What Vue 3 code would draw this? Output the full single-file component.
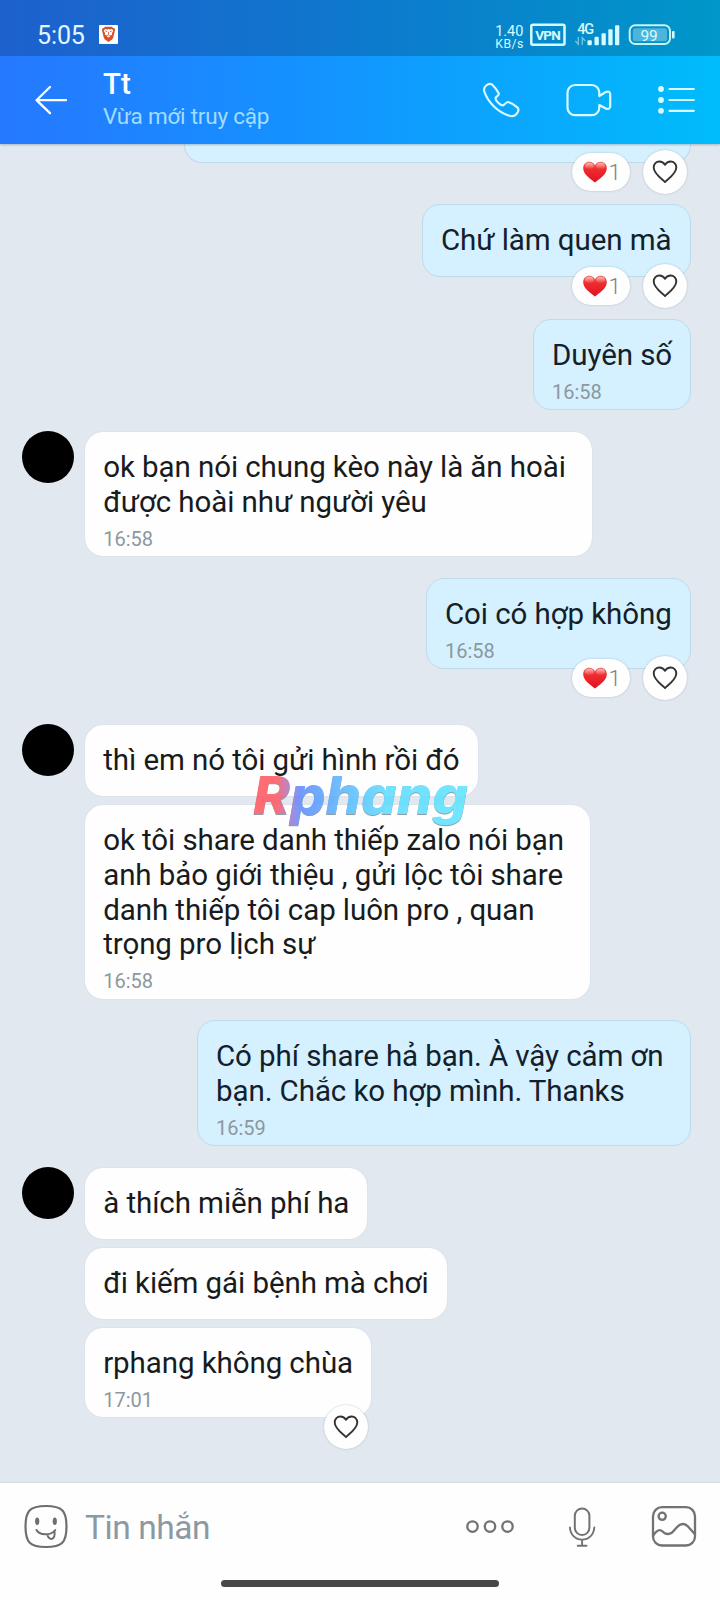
<script setup>
const messages = [
  { out: true, cut: true, lines: [], w: 507, h: 18, gap: 0, react: true, count: true },
  { out: true, lines: ['Chứ làm quen mà'], w: 269, h: 73, gap: 41, react: true, count: true },
  { out: true, lines: ['Duyên số'], time: '16:58', w: 158, h: 91, gap: 42 },
  { avatar: true, lines: ['ok bạn nói chung kèo này là ăn hoài', 'được hoài như người yêu'], time: '16:58', w: 506.5, h: 124, gap: 22 },
  { out: true, lines: ['Coi có hợp không'], time: '16:58', w: 265, h: 91, gap: 22, react: true, count: true },
  { avatar: true, lines: ['thì em nó tôi gửi hình rồi đó'], w: 393, h: 71, gap: 56 },
  {
    lines: ['ok tôi share danh thiếp zalo nói bạn', 'anh bảo giới thiệu , gửi lộc tôi share', 'danh thiếp tôi cap luôn pro , quan', 'trọng pro lịch sự'],
    time: '16:58', w: 505, h: 194, gap: 9,
  },
  { out: true, lines: ['Có phí share hả bạn. À vậy cảm ơn', 'bạn. Chắc ko hợp mình. Thanks'], time: '16:59', w: 494, h: 126, gap: 21 },
  { avatar: true, lines: ['à thích miễn phí ha'], w: 282, h: 71, gap: 22 },
  { lines: ['đi kiếm gái bệnh mà chơi'], w: 362, h: 71, gap: 9 },
  { lines: ['rphang không chùa'], time: '17:01', w: 286, h: 89, gap: 9, react: true },
]
const bars = [
  { x: 587.5, h: 5 },
  { x: 594.5, h: 8.5 },
  { x: 601.5, h: 12 },
  { x: 608.3, h: 16 },
  { x: 615, h: 20 },
]
</script>

<template>
  <div class="screen">
    <header class="top">
      <div class="status">
        <span class="clock">5:05</span>
        <svg class="brave" width="19" height="19" viewBox="0 0 19 19">
          <rect width="19" height="19" rx="1" fill="#fff" />
          <path d="M6 1.8h7l1.1 1.3 1.5.2.4 2.1-.3 1-1.5 6.3-1.1 1.7-3.6 2.6-3.6-2.6-1.1-1.7L3.300 6.400 3 5.400l.4-2.100 1.500-.2z" fill="#d9502a" />
          <path d="M6 4l2 .4L9.500 4l1.500.4L13 4l1.300 2-1.500 2.300.4 1.200-1.500 1-1-.6.300 1.600-1.500 1-1.500-1 .3-1.600-1 .6-1.500-1 .4-1.200L4.700 6z" fill="#fff" />
          <path d="M6.200 6l2 .7M12.800 6l-2 .7M9.500 6.800v3M8.200 10l1.300.7 1.300-.7" stroke="#d9502a" fill="none" stroke-width=".8" />
        </svg>
        <svg class="signals" width="192" height="56" viewBox="490 0 192 56">
          <g fill="#d6fbff">
            <text x="495.300" y="35.800" font-size="14.500" textLength="28">1.40</text>
            <text x="495.300" y="47.800" font-size="12.300" textLength="28">KB/s</text>
            <rect x="531.300" y="24.800" width="33.200" height="20" rx="1.500" fill="none" stroke="#d6fbff" stroke-width="2.500" />
            <text x="535.200" y="39.600" font-size="13.500" font-weight="700" textLength="25.500">VPN</text>
            <text x="577.300" y="33.500" font-size="14.500" font-weight="500" textLength="16.800">4G</text>
            <rect v-for="b in bars" :key="b.x" :x="b.x" :y="45.300 - b.h" width="4.300" :height="b.h" rx="1" />
            <path d="M578.300 37v7.200l-3-3.200M582.300 45v-7.200l3 3.200" stroke="#d6fbff" stroke-width="1.400" fill="none" opacity=".5" />
            <rect x="629.700" y="25.300" width="40.300" height="18.700" rx="5.500" fill="none" stroke="#c8f3f5" stroke-width="2" />
            <rect x="632.800" y="28.200" width="34.200" height="13" rx="2.500" fill="#4db4dc" />
            <rect x="672" y="31" width="2.600" height="7.500" rx="1" />
            <text x="640.600" y="40.600" font-size="15.500" textLength="17">99</text>
          </g>
        </svg>
      </div>
      <div class="appbar">
        <svg class="back" width="34" height="32" viewBox="34 84 34 32">
          <path d="M66 100.200H36.500M50 87L36.500 100.200 50 113.200" fill="none" stroke="#fff" stroke-width="2.300" stroke-linecap="round" stroke-linejoin="round" />
        </svg>
        <div class="who">
          <div class="name">Tt</div>
          <div class="seen">Vừa mới truy cập</div>
        </div>
        <svg class="actions" width="220" height="44" viewBox="480 78 220 44">
          <g fill="none" stroke="#d9fbff" stroke-width="2.200" stroke-linejoin="round" stroke-linecap="round">
            <path d="M486.200 85.500C488 84 490.500 83.200 492.300 84.800C494.800 87.200 497.300 90.500 498.700 93.200C499.600 95.300 496 96.600 495.500 98.200C495.300 100.500 500.500 105.400 502.700 105.400C504.500 105.200 506.200 101.600 508.200 102C511.500 103 515 105.300 517.300 107.300C519.400 109.500 518 112.300 516.300 114.200C514.500 116.100 512 116.500 509.300 115.700C498 112.300 488 102.500 484.300 91.500C483.500 89 484.300 87.100 486.200 85.500Z" />
            <path d="M599.300 96v-3.500a7.500 7.500 0 0 0-7.500-7.500H575a7.500 7.500 0 0 0-7.500 7.500v15.200a7.500 7.500 0 0 0 7.500 7.500h16.800a7.500 7.500 0 0 0 7.500-7.500V105l6.500 3.500c2.300 1 4.400.3 4.400-2.200V94.200c0-2.500-2.100-3.200-4.400-2.200z" />
            <path d="M669.500 89h24.300M669.500 100h24.300M669.500 110.800h24.300" />
          </g>
          <g fill="#d9fbff"><circle cx="661" cy="89" r="2.900" /><circle cx="661" cy="100" r="2.900" /><circle cx="661" cy="110.800" r="2.900" /></g>
        </svg>
      </div>
    </header>

    <main class="chat">
      <div v-for="(m, i) in messages" :key="i" class="row" :class="{ out: m.out }" :style="{ marginTop: m.gap + 'px' }">
        <div v-if="!m.out" class="side"><div v-if="m.avatar" class="avatar"></div></div>
        <div class="bubble" :class="{ mine: m.out, cut: m.cut }" :style="{ width: m.w + 'px', height: m.h + 'px' }">
          <div v-for="l in m.lines" :key="l" class="line">{{ l }}</div>
          <div v-if="m.time" class="time">{{ m.time }}</div>
          <div v-if="m.react" class="reactions">
            <div v-if="m.count" class="pill">
              <svg width="24" height="22" viewBox="0 0 24 22">
                <defs>
                  <linearGradient :id="'red' + i" x1="0" y1="0" x2="0" y2="1">
                    <stop offset="0" stop-color="#ee6a5c" /><stop offset=".35" stop-color="#f02c30" /><stop offset="1" stop-color="#e01222" />
                  </linearGradient>
                  <linearGradient :id="'shine' + i" x1="0" y1="0" x2="0" y2="1">
                    <stop offset="0" stop-color="#fff" stop-opacity=".55" /><stop offset="1" stop-color="#fff" stop-opacity="0" />
                  </linearGradient>
                </defs>
                <path d="M12 21.500C8 18 .2 13.800.2 7.200C.2 3.200 3 .8 6.200.8C9 .8 11 2.200 12 4.400C13 2.200 15 .8 17.800.8C21 .8 23.800 3.200 23.800 7.200C23.800 13.800 16 18 12 21.500Z" :fill="`url(#red${i})`" />
                <ellipse cx="6.300" cy="5" rx="4.300" ry="3.300" :fill="`url(#shine${i})`" />
                <ellipse cx="17.700" cy="5" rx="4.300" ry="3.300" :fill="`url(#shine${i})`" />
              </svg>
              <span class="count">1</span>
            </div>
            <div class="like">
              <svg width="26" height="24" viewBox="0 0 26 24">
                <path d="M13 22C10 19 1.700 13.600 1.700 7.500C1.700 4 4.300 1.500 7.300 1.500C10 1.500 12 3 13 4.800C14 3 16 1.500 18.700 1.500C21.700 1.500 24.300 4 24.300 7.500C24.300 13.600 16 19 13 22Z" fill="none" stroke="#333" stroke-width="1.900" stroke-linejoin="round" />
              </svg>
            </div>
          </div>
        </div>
      </div>
      <svg class="watermark" width="230" height="70" viewBox="246 765 230 70">
        <defs>
          <linearGradient id="brand" gradientUnits="userSpaceOnUse" x1="253" y1="0" x2="468" y2="0">
            <stop offset="0" stop-color="#ff5a62" /><stop offset=".11" stop-color="#ff5a62" /><stop offset=".17" stop-color="#a878c8" />
            <stop offset=".22" stop-color="#5f8dff" /><stop offset=".42" stop-color="#5cb8ff" /><stop offset=".62" stop-color="#5fdcff" /><stop offset="1" stop-color="#5fe4ff" />
          </linearGradient>
        </defs>
        <text class="mark" x="253" y="813.500" textLength="215" lengthAdjust="spacingAndGlyphs" fill="url(#brand)">Rphang</text>
      </svg>
    </main>

    <footer class="composer">
      <div class="inputs">
        <svg width="46" height="46" viewBox="23 1504 46 46">
          <g fill="none" stroke="#6e6e6e" stroke-width="2.200" stroke-linecap="round">
            <path d="M46 1506C62 1506 66.500 1510.500 66.500 1526.500S62 1547 46 1547S25.500 1542.500 25.500 1526.500S30 1506 46 1506Z" />
            <path d="M36.500 1530C39.500 1535.500 50.500 1536 55.300 1530M47.300 1534.200C48 1538 50 1539.300 52 1538.800C54.800 1538 55 1535.500 54.500 1531.200" stroke-width="2" />
          </g>
          <ellipse cx="37.200" cy="1521.200" rx="2.100" ry="3.800" fill="#6e6e6e" /><ellipse cx="54.800" cy="1521.200" rx="2.100" ry="3.800" fill="#6e6e6e" />
        </svg>
        <span class="placeholder">Tin nhắn</span>
        <svg width="236" height="46" viewBox="464 1504 236 46">
          <g fill="none" stroke="#727272" stroke-width="2.300" stroke-linecap="round" stroke-linejoin="round">
            <circle cx="472.500" cy="1526.600" r="5.200" /><circle cx="490" cy="1526.600" r="5.200" /><circle cx="507.500" cy="1526.600" r="5.200" />
            <rect x="574.800" y="1508.500" width="14.600" height="26.500" rx="7.300" stroke-width="2" />
            <path d="M569.900 1527.500C570.500 1535 575.500 1539.700 582.100 1539.700S593.700 1535 594.300 1527.500M582.100 1540v5.500M577.700 1545.800h8.800" stroke-width="1.900" />
            <rect x="653" y="1507.200" width="42" height="38.300" rx="9" />
            <circle cx="662.200" cy="1516.300" r="3.600" />
            <path d="M653.500 1535C658.500 1528 661.500 1530 663.500 1532.300C667 1535.300 671.500 1534 674 1530.500C678.500 1524.500 683.500 1521.500 688 1526.500L694.700 1534" />
          </g>
        </svg>
      </div>
      <div class="homebar"></div>
    </footer>
  </div>
</template>

<style>
body { margin: 0; }
</style>
<style scoped>
.screen { width: 720px; height: 1600px; display: flex; flex-direction: column; background: #e1e8ef; font-family: Roboto, "Noto Sans", sans-serif; overflow: hidden; }
.top { flex: none; height: 144px; background: linear-gradient(90deg, #2678ff, #1296ff 48%, #00bcfb); box-shadow: 0 1px 2px rgba(60, 90, 120, .35); position: relative; z-index: 2; }
.status { height: 56px; display: flex; align-items: flex-start; background: rgba(0, 0, 0, .195); color: #e4f6ff; box-sizing: border-box; padding-left: 37px; }
.clock { width: 62px; font-size: 25px; line-height: 30px; padding-top: 21px; letter-spacing: -.1px; box-sizing: border-box; white-space: nowrap; }
.brave { margin-top: 25px; }
.signals { margin-left: 372px; }
.appbar { height: 88px; display: flex; align-items: center; }
.back { margin-left: 34px; }
.who { margin-left: 35px; width: 377px; margin-top: -1px; }
.name { color: #fff; font-size: 29.500px; line-height: 33px; font-weight: 500; }
.seen { color: #a3dcff; font-size: 22.500px; line-height: 30px; letter-spacing: -.22px; }
.chat { flex: none; height: 1339px; position: relative; overflow: hidden; }
.row { display: flex; }
.row.out { justify-content: flex-end; padding-right: 29px; }
.side { width: 85px; flex: none; }
.avatar { width: 52px; height: 52px; margin: -1px 0 0 21.500px; border-radius: 50%; background: #000; }
.bubble { position: relative; box-sizing: border-box; padding: 18px 0 0 18.200px; border-radius: 18px; background: #fefefe; color: #181b1d; box-shadow: 0 0 1px rgba(120, 140, 150, .35); }
.bubble.mine { background: #d5f0fe; border: 1px solid #bfdae8; color: #13202a; padding: 18px 0 0 18px; box-shadow: none; }
.bubble.cut { border-top: 0; border-radius: 0 0 18px 18px; }
.line { font-size: 29.500px; line-height: 34.800px; letter-spacing: -.08px; white-space: nowrap; }
.time { margin-top: 7px; font-size: 20px; line-height: 24px; color: #8b989f; }
.reactions { position: absolute; right: 3px; bottom: -33px; height: 46px; display: flex; align-items: center; gap: 13px; }
.pill { width: 58px; height: 38px; border-radius: 19px; background: #fefefe; box-sizing: border-box; padding-left: 10.500px; display: flex; align-items: center; gap: 2px; box-shadow: 0 0 2px rgba(80, 110, 130, .4); }
.count { color: #828282; font-size: 22.500px; font-weight: 300; line-height: 38px; }
.like { width: 44px; height: 44px; border-radius: 50%; background: #fefefe; display: flex; align-items: center; justify-content: center; box-shadow: 0 0 2px rgba(80, 110, 130, .4); }
.watermark { position: absolute; left: 246px; top: 621px; opacity: .88; overflow: visible; }
.mark { font-family: Inter, Roboto, sans-serif; font-style: italic; font-weight: 800; font-size: 52px; filter: drop-shadow(0 1.500px 0 #7d929c); }
.composer { flex: none; height: 117px; background: #fefefe; box-shadow: 0 -1px 1px #d3dde2; position: relative; }
.inputs { height: 87px; display: flex; align-items: center; padding-left: 23px; }
.placeholder { width: 378px; margin-left: 16px; margin-right: 1px; font-size: 33.500px; letter-spacing: -.45px; line-height: 42px; padding-top: 2px; color: #8b99a2; }
.homebar { width: 278px; height: 7px; border-radius: 4px; background: #484848; margin: 10px auto 0; }
</style>
